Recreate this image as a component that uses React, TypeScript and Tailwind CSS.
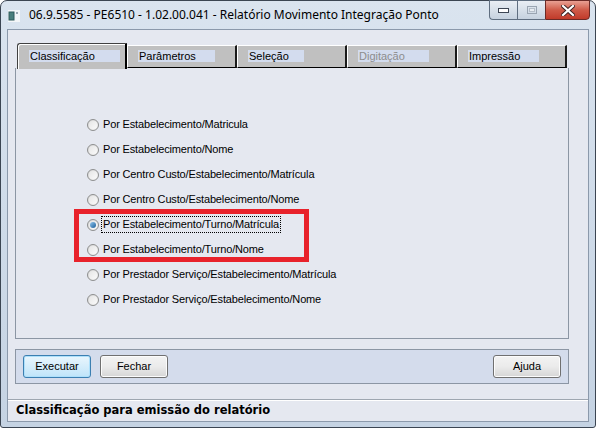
import React from 'react';

const tahoma = { fontFamily: '"Liberation Sans", Arial, sans-serif' };

const tabs = [
  { label: 'Classificação', box: 'w-[91px]', active: true },
  { label: 'Parâmetros', box: 'w-[77px]' },
  { label: 'Seleção', box: 'w-[56px]' },
  { label: 'Digitação', box: 'w-[71px]', disabled: true },
  { label: 'Impressão', box: 'w-[71px]' },
];

const options = [
  'Por Estabelecimento/Matricula',
  'Por Estabelecimento/Nome',
  'Por Centro Custo/Estabelecimento/Matrícula',
  'Por Centro Custo/Estabelecimento/Nome',
  'Por Estabelecimento/Turno/Matrícula',
  'Por Estabelecimento/Turno/Nome',
  'Por Prestador Serviço/Estabelecimento/Matrícula',
  'Por Prestador Serviço/Estabelecimento/Nome',
];

const Radio = ({ checked }: { checked?: boolean }) => (
  <span className="relative w-[12px] h-[12px] rounded-full border border-[#8e8f8f] bg-gradient-to-br from-[#d8d8d8] to-[#f6f6f6] flex items-center justify-center shrink-0">
    <span className="w-[8px] h-[8px] rounded-full bg-gradient-to-br from-[#e6e6e6] to-[#fafafa] flex items-center justify-center">
      {checked && <span className="w-[6px] h-[6px] rounded-full bg-gradient-to-br from-[#8fc6ee] to-[#1a5f9a]"></span>}
    </span>
  </span>
);

const Btn = ({ label, primary }: { label: string; primary?: boolean }) => (
  <button
    className={`w-[68px] h-[23px] rounded-[3px] border text-[11px] text-black flex items-center justify-center
    ${primary ? 'border-[#3c7fb1] bg-gradient-to-b from-[#eaf6fd] to-[#bfe4f9] shadow-[inset_0_0_0_1px_#aee0fb]' : 'border-[#707070] bg-gradient-to-b from-[#f3f3f3] via-[#ebebeb] to-[#d6d6d6] shadow-[inset_0_0_0_1px_#fcfcfc]'}`}
    style={tahoma}
  >
    {label}
  </button>
);

export default function App() {
  return (
    <div className="w-[597px] h-[433px] bg-white overflow-hidden">
      <div className="w-[596px] h-[428px] flex flex-col border border-[#3b4552] rounded-t-[7px] rounded-b-[3px] bg-gradient-to-b from-[#dae4ef] via-[#cfdbe9] to-[#c5d3e3]">
        {/* title bar */}
        <div className="h-[28px] flex items-start shrink-0">
          <svg width="12" height="12" viewBox="0 0 12 12" className="mt-[9px] ml-[7px]">
            <rect x="0" y="0" width="12" height="12" fill="#f4f6f8" />
            <rect x="0.5" y="1.5" width="6" height="9" fill="#2f5a5a" />
            <rect x="1.5" y="2.5" width="4" height="7" fill="#4b7f7c" />
            <rect x="8" y="2" width="2" height="2" fill="#9aa7b0" />
          </svg>
          <span className="ml-[9px] mt-[6px] text-[12px] text-black leading-[16px] whitespace-nowrap" style={{ fontFamily: '"Noto Sans", "Open Sans", sans-serif' }}>
            06.9.5585 - PE6510 - 1.02.00.041 - Relatório Movimento Integração Ponto
          </span>
          <div className="ml-auto mr-[5px] -mt-px flex h-[20px]">
            <div className="w-[28px] h-full border border-[#5f6e80] border-r-0 rounded-bl-[4px] bg-gradient-to-b from-[#e9eef4] to-[#c6d2df] flex items-center justify-center">
              <svg width="12" height="6" viewBox="0 0 12 6"><rect x="0.5" y="1.5" width="10" height="4" fill="#fff" stroke="#3d4654" /></svg>
            </div>
            <div className="w-[28px] h-full border border-[#5f6e80] border-r-0 bg-gradient-to-b from-[#e9eef4] to-[#c6d2df] flex items-center justify-center">
              <svg width="12" height="10" viewBox="0 0 12 10"><rect x="1.5" y="1.5" width="9" height="7" fill="none" stroke="#9aa5b2" /><rect x="3.5" y="3.5" width="5" height="3" fill="#e8edf2" stroke="#b5bec9" /></svg>
            </div>
            <div className="w-[45px] h-full border border-[#6b2a26] rounded-br-[4px] bg-gradient-to-b from-[#e8a093] via-[#cf5a48] to-[#c13a2a] flex items-center justify-center">
              <svg width="14" height="11" viewBox="0 0 14 11">
                <path d="M2 1 L12 10 M12 1 L2 10" stroke="#3a2020" strokeWidth="4" strokeLinecap="square" />
                <path d="M2 1 L12 10 M12 1 L2 10" stroke="#fff" strokeWidth="2.2" strokeLinecap="square" />
              </svg>
            </div>
          </div>
        </div>

        {/* client */}
        <div className="mx-[6px] h-[393px] flex flex-col border border-[#8b99ab] bg-[#e5e8f0]" style={tahoma}>
          <div className="pl-[7px] pr-[19px] pt-[13px] flex flex-col">
            {/* tabs */}
            <div className="flex items-end h-[25px] pl-[2px]">
              {tabs.map(t => (
                <div
                  key={t.label}
                  className={`w-[110px] bg-[#c0c0c0] flex items-start
                  ${t.active ? 'h-[26px] -mb-px z-10 border-t border-l border-[#404040] border-r-2 border-r-black rounded-tl-[3px] shadow-[inset_1px_1px_0_#fff] pl-[11px] pt-[6px]' : 'h-[23px] border-t border-l border-white border-r-2 border-r-[#1a1a1a] border-b border-b-black pl-[10px] pt-[4px]'}`}
                >
                  <span className={`${t.box} h-[12px] bg-[#d3dcee] text-[11px] leading-[12px] pl-px whitespace-nowrap ${t.disabled ? 'text-[#8d8d8d]' : 'text-black'}`}>
                    {t.label}
                  </span>
                </div>
              ))}
            </div>
            {/* page */}
            <div className="relative h-[271px] border-l border-r border-b border-[#8c96a4] pl-[71px] pt-[44px] flex flex-col">
              {options.map((o, i) => (
                <div key={o} className="h-[25px] flex items-center gap-[4px]">
                  <Radio checked={i === 4} />
                  <span className={`text-[11px] tracking-[-0.15px] leading-[15px] text-black whitespace-nowrap ${i === 4 ? 'outline outline-1 outline-dotted outline-black -ml-px px-px' : ''}`}>
                    {o}
                  </span>
                </div>
              ))}
              <div className="absolute left-[58px] top-[141px] w-[235px] h-[53px] border-[5px] border-[#e8222b]"></div>
            </div>
          </div>

          {/* buttons */}
          <div className="ml-[7px] mr-[19px] mt-[10px] h-[35px] border border-[#8c96a4] bg-[#d4dcec] flex items-center px-[7px] gap-[9px]">
            <Btn label="Executar" primary />
            <Btn label="Fechar" />
            <div className="ml-auto">
              <Btn label="Ajuda" />
            </div>
          </div>

          {/* status */}
          <div className="mt-auto h-[22px] border-t border-[#9ea6b0] shadow-[inset_0_1px_0_#fff] flex items-center pl-[8px]">
            <span className="text-[11.5px] font-bold text-black whitespace-nowrap" style={{ fontFamily: '"DejaVu Sans", Verdana, sans-serif' }}>
              Classificação para emissão do relatório
            </span>
          </div>
        </div>
      </div>
    </div>
  );
}
